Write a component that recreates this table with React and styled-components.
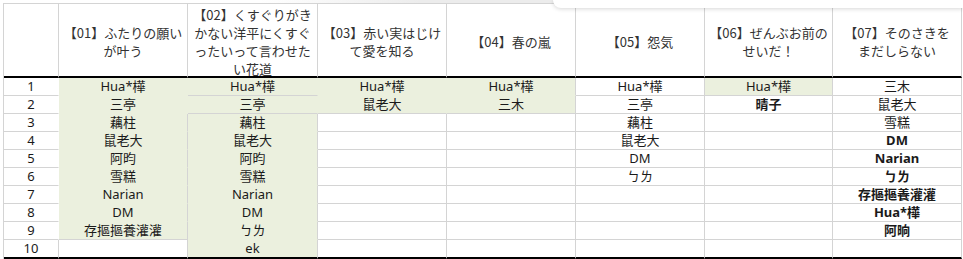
import React from "react";
import styled, { createGlobalStyle } from "styled-components";

const GlobalStyle = createGlobalStyle`
  html, body { margin: 0; padding: 0; background: #ffffff; }
  body { width: 963px; height: 259px; overflow: hidden; position: relative; }
`;

const GRID = "#d4d4d4";
const FILL = "#ebf0de";
const WIDTHS = [55, 129, 130, 129, 129, 129, 128, 129];

const Sheet = styled.div`
  margin: 3px 0 0 3px;
  display: grid;
  grid-template-columns: ${WIDTHS.map((w) => `${w}px`).join(" ")};
  grid-template-rows: 74px repeat(9, 18px) 19px;
  border-top: 1px solid ${GRID};
  border-left: 1px solid ${GRID};
  width: max-content;
  font-family: "Noto Sans", "Noto Sans CJK TC", sans-serif;
  font-size: 13px;
  color: #1a1a1a;
`;

const HeadCell = styled.div`
  box-sizing: border-box;
  border-right: 1px solid ${GRID};
  border-bottom: 2px solid #000;
  background: #fff;
  display: flex;
  align-items: center;
  justify-content: center;
  text-align: center;
  padding: 3px 2px 0;
  font-family: "Noto Sans CJK JP", "Noto Sans", sans-serif;
  font-size: 13px;
  line-height: 18px;
  color: #333;
  white-space: nowrap;
`;

const Cell = styled.div`
  box-sizing: border-box;
  background: ${(p) => (p.$fill ? FILL : "#fff")};
  border-right: 1px solid ${(p) => (p.$right ? GRID : "transparent")};
  border-bottom: ${(p) =>
    p.$last ? "2px solid #000" : `1px solid ${p.$bottom ? GRID : "transparent"}`};
  display: flex;
  align-items: center;
  justify-content: center;
  line-height: 17px;
  font-weight: ${(p) => (p.$bold ? 700 : 400)};
  white-space: nowrap;
  overflow: hidden;
`;

const RowNum = styled(Cell)`
  color: #1a1a1a;
`;

const TopShade = styled.div`
  position: absolute;
  top: 0;
  left: 0;
  right: 0;
  height: 3px;
  background: linear-gradient(to right, rgba(236, 236, 236, 0) 0px, rgba(236, 236, 236, 0) 260px, #ececec 420px);
  pointer-events: none;
`;

const FloatPanel = styled.div`
  position: absolute;
  top: 0;
  left: 553px;
  right: 0;
  height: 8px;
  background: #fff;
  border-bottom-left-radius: 8px;
  box-shadow: 0 1px 4px rgba(0, 0, 0, 0.16);
  pointer-events: none;
`;

const headers = [
  ["【01】ふたりの願い", "が叶う"],
  ["【02】くすぐりがき", "かない洋平にくすぐ", "ったいって言わせた", "い花道"],
  ["【03】赤い実はじけ", "て愛を知る"],
  ["【04】春の嵐"],
  ["【05】怨気"],
  ["【06】ぜんぶお前の", "せいだ！"],
  ["【07】そのさきを", "まだしらない"],
];

const B = (t) => ({ t, b: true });

const data = [
  ["Hua*樺", "三亭", "藕柱", "鼠老大", "阿昀", "雪糕", "Narian", "DM", "存摳摳養灌灌", ""],
  ["Hua*樺", "三亭", "藕柱", "鼠老大", "阿昀", "雪糕", "Narian", "DM", "ㄅㄌ", "ek"],
  ["Hua*樺", "鼠老大", "", "", "", "", "", "", "", ""],
  ["Hua*樺", "三木", "", "", "", "", "", "", "", ""],
  ["Hua*樺", "三亭", "藕柱", "鼠老大", "DM", "ㄅㄌ", "", "", "", ""],
  ["Hua*樺", B("晴子"), "", "", "", "", "", "", "", ""],
  ["三木", "鼠老大", "雪糕", B("DM"), B("Narian"), B("ㄅㄌ"), B("存摳摳養灌灌"), B("Hua*樺"), B("阿晌"), ""],
];

const fillCount = [9, 10, 2, 2, 0, 1, 0];

const isFill = (c, r) => c >= 0 && c < 7 && r >= 0 && r < 10 && r < fillCount[c];

// borders that are drawn even though both neighbours are filled
const forcedBottom = (c, r) => c === 1 && (r === 0 || r === 1);
const forcedRight = (c, r) => c === 0 && r >= 2 && r <= 8;

export default function App() {
  const cells = [];
  cells.push(<HeadCell key="h-num" />);
  headers.forEach((lines, i) => {
    cells.push(
      <HeadCell key={`h-${i}`}>
        <span>
          {lines.map((l, j) => (
            <React.Fragment key={j}>
              {j > 0 && <br />}
              {l}
            </React.Fragment>
          ))}
        </span>
      </HeadCell>
    );
  });

  for (let r = 0; r < 10; r++) {
    const last = r === 9;
    cells.push(
      <RowNum
        key={`n-${r}`}
        $right={!isFill(0, r)}
        $bottom
        $last={last}
      >
        {r + 1}
      </RowNum>
    );
    for (let c = 0; c < 7; c++) {
      const raw = data[c][r];
      const val = typeof raw === "object" ? raw.t : raw;
      const bold = typeof raw === "object" ? raw.b : false;
      const fill = isFill(c, r);
      const right = c === 6 ? true : !(fill && isFill(c + 1, r)) || forcedRight(c, r);
      const bottom = !(fill && isFill(c, r + 1)) || forcedBottom(c, r);
      cells.push(
        <Cell
          key={`c-${c}-${r}`}
          $fill={fill}
          $right={right}
          $bottom={bottom}
          $last={last}
          $bold={bold}
        >
          {val}
        </Cell>
      );
    }
  }

  return (
    <>
      <GlobalStyle />
      <Sheet>{cells}</Sheet>
      <TopShade />
      <FloatPanel />
    </>
  );
}
